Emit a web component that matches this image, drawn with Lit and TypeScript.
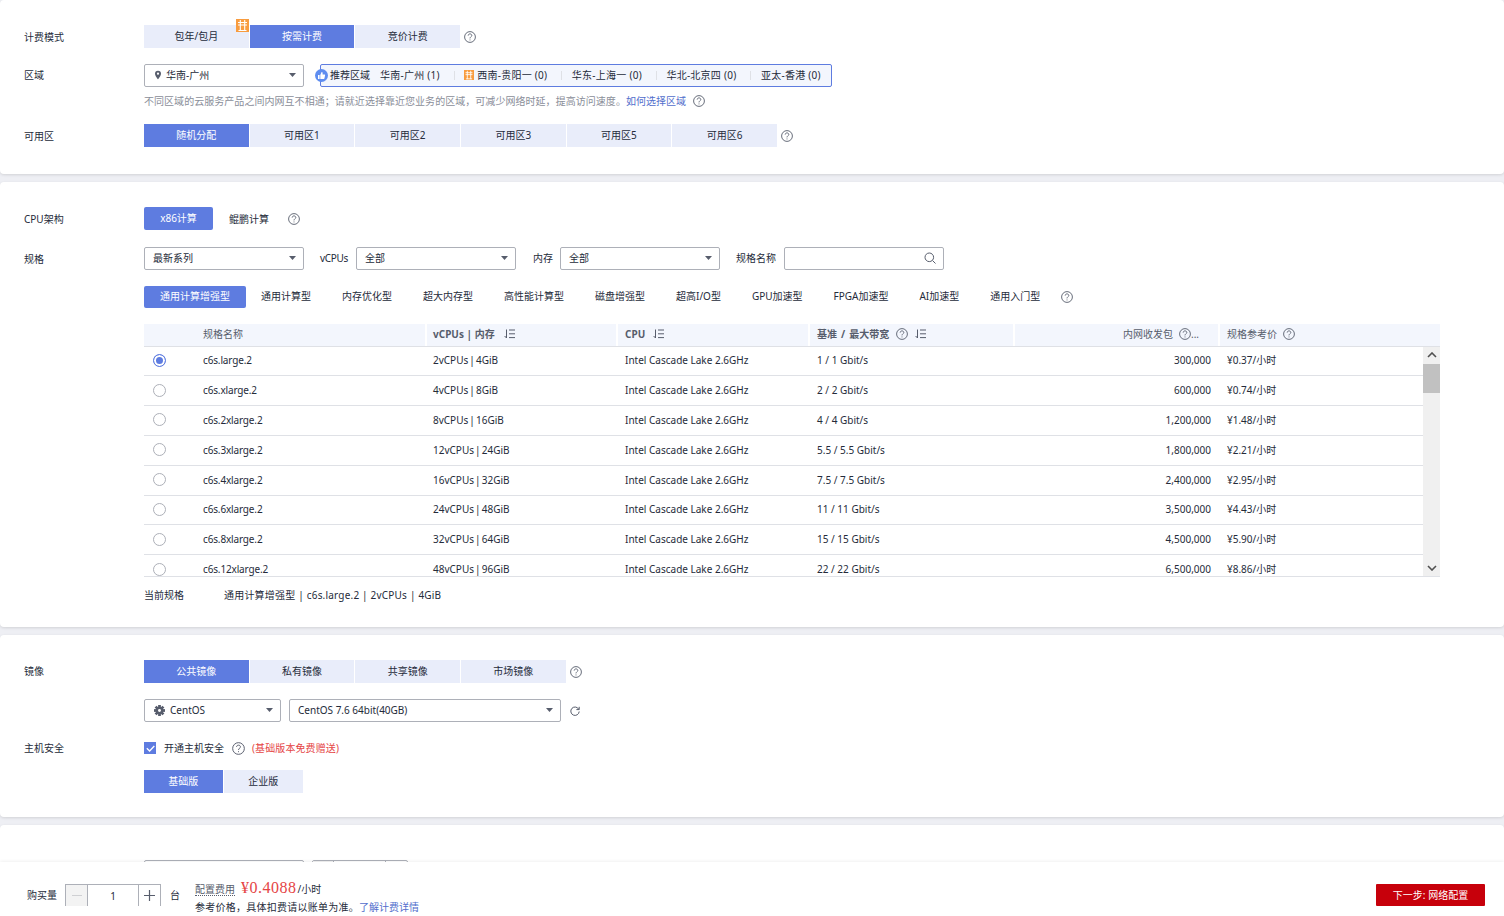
import { LitElement, html, css, svg } from "lit";
import { customElement } from "lit/decorators.js";

const q = (s = 12) => html`<svg class="q" width=${s} height=${s} viewBox="0 0 12 12" fill="none" stroke="#575d6c" stroke-width=".9"><circle cx="6" cy="6" r="5.4"/><path d="M4.2 4.6c0-1 .8-1.7 1.8-1.7s1.8.7 1.8 1.6c0 1.2-1.8 1.4-1.8 2.9"/><path d="M6 8.5v.9"/></svg>`;
const sort = () => html`<svg class="sort" width="11" height="10" viewBox="0 0 11 10" fill="none" stroke="#575d6c" stroke-width="1"><path d="M2.5 0.5v8.5M.6 7l1.9 2M5 1h6M5 4.8h6M5 8.6h6"/></svg>`;
const gift = (s: number) => html`<svg width=${s} height=${s} viewBox="0 0 13 13"><rect width="13" height="13" fill="#f89c3f"/><path d="M2 3.5h9M2 6h9M4.3 1v11M8.7 1v11M2.5 11.5h8" stroke="#fff" stroke-width="1.1" fill="none"/></svg>`;
const arrow = () => html`<svg class="arr" width="7" height="4" viewBox="0 0 7 4"><path d="M0 0h7L3.5 4z" fill="#575d6c"/></svg>`;
const seg = (items: string[], active: number, cls = "") => items.map((t, i) => html`<div class="seg ${cls} ${i === active ? "on" : ""}">${t}</div>`);

const rows = [
  ["c6s.large.2", "2vCPUs | 4GiB", "1 / 1 Gbit/s", "300,000", "¥0.37/小时"],
  ["c6s.xlarge.2", "4vCPUs | 8GiB", "2 / 2 Gbit/s", "600,000", "¥0.74/小时"],
  ["c6s.2xlarge.2", "8vCPUs | 16GiB", "4 / 4 Gbit/s", "1,200,000", "¥1.48/小时"],
  ["c6s.3xlarge.2", "12vCPUs | 24GiB", "5.5 / 5.5 Gbit/s", "1,800,000", "¥2.21/小时"],
  ["c6s.4xlarge.2", "16vCPUs | 32GiB", "7.5 / 7.5 Gbit/s", "2,400,000", "¥2.95/小时"],
  ["c6s.6xlarge.2", "24vCPUs | 48GiB", "11 / 11 Gbit/s", "3,500,000", "¥4.43/小时"],
  ["c6s.8xlarge.2", "32vCPUs | 64GiB", "15 / 15 Gbit/s", "4,500,000", "¥5.90/小时"],
  ["c6s.12xlarge.2", "48vCPUs | 96GiB", "22 / 22 Gbit/s", "6,500,000", "¥8.86/小时"],
];

const regions = ["华南-广州 (1)", "西南-贵阳一 (0)", "华东-上海一 (0)", "华北-北京四 (0)", "亚太-香港 (0)"];
const flavors = ["通用计算增强型", "通用计算型", "内存优化型", "超大内存型", "高性能计算型", "磁盘增强型", "超高I/O型", "GPU加速型", "FPGA加速型", "AI加速型", "通用入门型"];

@customElement("app-root")
export class AppRoot extends LitElement {
  static styles = css`
    :host { display: block; position: relative; height: 916px; overflow: hidden; background: #eeeff4; color: #252b3a;
      font: 10px/14px "Noto Sans", "Noto Sans CJK SC", sans-serif; }
    * { box-sizing: border-box; }
    svg { display: block; flex: none; }
    .card { background: #fff; border-radius: 4px; padding-left: 24px; margin-bottom: 8px; box-shadow: 0 1px 3px rgba(0,0,0,.12); }
    .c1 { padding-top: 25px; padding-bottom: 27px; height: 174px; }
    .c2 { padding-top: 25px; height: 445px; }
    .c3 { padding-top: 25px; height: 182px; }
    .c4 { padding-top: 35px; height: 100px; padding-left: 144px; display: flex; gap: 8px; }
    .row { display: flex; align-items: center; }
    .label { width: 120px; flex: none; padding-top: 1px; }
    .label.lt { padding-top: 0; padding-bottom: 1px; }
    .seg { width: 105.67px; height: 23px; line-height: 23px; text-align: center; background: #e9edfa; border-right: 1px solid #fff; position: relative; flex: none; }
    .seg.on { background: #5e7ce0; color: #fff; }
    .seg.short { width: 79.5px; }
    .seg.short + .seg.short { width: 79.5px; border-right: 0; }
    .seg .badge { position: absolute; right: 0; top: -6px; height: 13px; overflow: hidden; }
    .mt16 { margin-top: 16px; } .mt17 { margin-top: 17px; }
    .q { margin-left: 3.5px; }
    .sel { height: 23px; border: 1px solid #adb0b8; border-radius: 2px; display: flex; align-items: center; padding: 0 8px 1px; position: relative; background: #fff; flex: none; }
    .sel .arr { margin-left: auto; margin-right: -1px; }
    .sel .search { margin-left: auto; margin-right: -1px; }
    .w160 { width: 160px; }
    .pin { margin: 0 5px 0 2px; }
    .strip { width: 512px; height: 23px; margin-left: 16px; border: 1px solid #5e7ce0; border-radius: 2px; background: #f3f6fd; position: relative; display: flex; align-items: center; padding: 0 0 1px 9px; }
    .thumb { position: absolute; left: -6px; top: 4px; }
    .rec { margin-right: 10px; flex: none; white-space: nowrap; }
    .reg { flex: none; display: flex; align-items: center; gap: 3px; padding-right: 15px; margin-right: 9.5px; position: relative; white-space: nowrap; letter-spacing: .25px; }
    .reg::after { content: ""; position: absolute; right: 0; top: 3px; height: 9px; width: 1px; background: #dfe1e6; }
    .reg:last-child { padding-right: 0; margin-right: 0; }
    .reg:last-child::after { display: none; }
    .hint { margin: 6px 0 0 120px; color: #8a8e99; height: 15px; display: flex; align-items: center; white-space: nowrap; letter-spacing: .04px; }
    .hint a, .link { color: #526ecc; }
    .hint .q { margin-left: 7px; }
    .mt-hint { margin-top: 16px; }
    .x86 { width: 69px; height: 23px; line-height: 23px; text-align: center; color: #fff; background: #5e7ce0; border-radius: 2px; }
    .kp { margin: 0 15px 0 16px; }
    .flab { margin: 0 8px 0 16px; padding-bottom: 1px; }
    .flab.vc { letter-spacing: -.3px; }
    .flab.mem { margin: 0 7px 0 17px; }
    .tabs { margin-left: 120px; height: 22px; }
    .tab { padding: 0 15.5px; height: 22px; line-height: 21px; white-space: nowrap; border-radius: 2px; }
    .tab.on { background: #5e7ce0; color: #fff; padding: 0 16px; margin-right: -.5px; }
    .tabs .q { margin-left: 5.5px; }
    .table { margin: 16px 0 0 120px; width: 1296px; }
    .head, .tr { display: grid; grid-template-columns: 59px 222px 191px 192px 205px 205px 1fr; align-items: center; }
    .head { height: 23px; background: #f3f6fd; border-bottom: 1px solid #dfe1e6; color: #575d6c; }
    .head > div { height: 22px; display: flex; align-items: center; padding: 0 0 2px 7px; gap: 8px; border-left: 2px solid #fff; white-space: nowrap; }
    .head > div:first-child, .head > div:nth-child(2) { border-left: 0; padding-left: 0; }
    .head > .c-vc { padding-left: 6px; gap: 9px; }
    .head .b { font-weight: 700; }
    .head .q { margin-left: 0; }
    .head > .wide { word-spacing: 1.5px; gap: 7px; }
    .head > .right { justify-content: flex-end; padding: 0 19px 2px 0; gap: 6px; }
    .head .dots { margin-left: -6px; }
    .head > .price-h { gap: 6px; }
    .bodywrap { display: flex; height: 230px; border-bottom: 1px solid #dfe1e6; }
    .body { width: 1279px; overflow: hidden; }
    .tr { height: 29.85px; padding-bottom: 1.1px; border-bottom: 1px solid #dfe1e6; white-space: nowrap; color: #252b3a; }
    .tr:first-child { height: 29.2px; padding-bottom: 1.5px; }
    .tr > div { padding-left: 9px; }
    .tr > .name { padding-left: 0; letter-spacing: -.15px; }
    .tr > .vc { padding-left: 8px; word-spacing: -1.5px; }
    .tr > .num { text-align: right; padding: 0 7px 0 0; }
    .radio { width: 13px; height: 13px; border-radius: 50%; border: 1px solid #adb0b8; margin-left: 9px; padding: 0 !important; background: #fff; }
    .radio.on { border-color: #5e7ce0; box-shadow: inset 0 0 0 2px #fff; background: #5e7ce0; }
    .track { width: 17px; background: #f0f0f0; position: relative; display: flex; flex-direction: column; align-items: center; }
    .track .up { margin: 5px 0 6px; }
    .bar { width: 17px; height: 29px; background: #c1c1c1; }
    .track .down { margin-top: auto; margin-bottom: 5px; }
    .cur { margin: 10px 0 0 120px; height: 16px; display: flex; align-items: center; letter-spacing: .2px; }
    .cur .k { width: 80px; letter-spacing: 0; }
    .gear { margin-right: 5px; margin-left: 1px; }
    .w137 { width: 137px; } .w272 { width: 272px; margin-left: 8px; }
    .refresh { margin-left: 9px; }
    .mt20 { margin-top: 20px; }
    .h12 { height: 12px; }
    .check { width: 12px; height: 12px; background: #5e7ce0; margin-right: 8px; display: flex; align-items: center; justify-content: center; }
    .red { color: #e54545; margin-left: 7px; letter-spacing: .1px; }
    .sec-q { margin: 0 0 0 4.5px; }
    .sec-q .q { margin-left: 3.5px; }
    .indent { margin-left: 120px; }
    .peek { width: 96px; height: 23px; border: 1px solid #adb0b8; border-radius: 2px; flex: none; display: flex; }
    .peek .pm { width: 21px; background: #f3f3f3; border-right: 1px solid #adb0b8; }
    .peek .pp { width: 22px; margin-left: auto; border-left: 1px solid #adb0b8; }
    .footer { position: absolute; left: 0; right: 0; bottom: 0; height: 54px; background: #fff; box-shadow: 0 -1px 3px rgba(0,0,0,.06); display: flex; padding: 22px 19px 0 27px; }
    .buy { width: 38px; line-height: 22px; }
    .stepper { display: flex; width: 96px; height: 22px; border: 1px solid #adb0b8; border-bottom: 0; flex: none; }
    .stepper > div { display: flex; align-items: center; justify-content: center; }
    .minus { width: 22px; background: #f3f3f3; border-right: 1px solid #adb0b8; }
    .val { flex: 1; }
    .plus { width: 22px; border-left: 1px solid #adb0b8; }
    .tai { margin: 0 15px 0 9px; line-height: 22px; width: 10px; }
    .fee { margin-top: -5px; }
    .l1 { display: flex; align-items: baseline; height: 18px; }
    .dot { border-bottom: 1px dotted #575d6c; color: #575d6c; line-height: 12px; }
    .price { color: #e54545; font: 16px/18px "Liberation Serif", serif; letter-spacing: .5px; margin: 0 1px 0 6px; }
    .l2 { margin-top: 3px; white-space: nowrap; }
    .l2 .tx { letter-spacing: .25px; }
    .next { margin-left: auto; width: 109px; height: 22px; line-height: 22px; text-align: center; background: #c7000b; color: #fff; border-radius: 1px; }
  `;

  render() {
    return html`
      <div class="card c1">
        <div class="row">
          <div class="label">计费模式</div>
          <div class="seg">包年/包月<span class="badge">${gift(13)}</span></div>
          ${seg(["按需计费", "竞价计费"], 0)}
          ${q()}
        </div>
        <div class="row mt16">
          <div class="label lt">区域</div>
          <div class="sel w160">
            <svg class="pin" width="6" height="10" viewBox="0 0 7 10"><path fill-rule="evenodd" d="M3.5 0A3.5 3.5 0 0 1 7 3.5C7 6 3.5 10 3.5 10S0 6 0 3.5A3.5 3.5 0 0 1 3.5 0zm0 2.2a1.3 1.3 0 1 0 0 2.6 1.3 1.3 0 0 0 0-2.6z" fill="#575d6c"/></svg>
            华南-广州${arrow()}
          </div>
          <div class="strip">
            <svg class="thumb" width="13" height="13" viewBox="0 0 13 13"><circle cx="6.5" cy="6.5" r="6.5" fill="#5e8df0"/><path d="M3 6h1.6v4H3zM5.3 6l1.3-3c.7 0 1 .5 1 1.1V5.500h2c.4 0 .6.300.5.700l-.7 3.300c0 .3-.3.500-.6.500H5.300z" fill="#fff"/></svg>
            <span class="rec">推荐区域</span>
            ${regions.map((r, i) => html`<div class="reg">${i === 1 ? gift(10) : ""}${r}</div>`)}
          </div>
        </div>
        <div class="hint">不同区域的云服务产品之间内网互不相通；请就近选择靠近您业务的区域，可减少网络时延，提高访问速度。<a>如何选择区域</a>${q()}</div>
        <div class="row mt-hint">
          <div class="label">可用区</div>
          ${seg(["随机分配", "可用区1", "可用区2", "可用区3", "可用区5", "可用区6"], 0)}
          ${q()}
        </div>
      </div>

      <div class="card c2">
        <div class="row">
          <div class="label">CPU架构</div>
          <div class="x86">x86计算</div>
          <div class="kp">鲲鹏计算</div>
          ${q()}
        </div>
        <div class="row mt17">
          <div class="label">规格</div>
          <div class="sel w160">最新系列${arrow()}</div>
          <span class="flab vc">vCPUs</span>
          <div class="sel w160">全部${arrow()}</div>
          <span class="flab mem">内存</span>
          <div class="sel w160">全部${arrow()}</div>
          <span class="flab">规格名称</span>
          <div class="sel w160"><svg class="search" width="12" height="12" viewBox="0 0 12 12" fill="none" stroke="#575d6c" stroke-width="1"><circle cx="5.300" cy="5.300" r="4.300"/><path d="M8.500 8.500l3 3"/></svg></div>
        </div>
        <div class="row tabs mt16">
          ${flavors.map((f, i) => html`<div class="tab ${i === 0 ? "on" : ""}">${f}</div>`)}
          ${q()}
        </div>
        <div class="table">
          <div class="head">
            <div></div>
            <div>规格名称</div>
            <div class="b c-vc">vCPUs | 内存 ${sort()}</div>
            <div class="b">CPU ${sort()}</div>
            <div class="b wide">基准 / 最大带宽 ${q()} ${sort()}</div>
            <div class="right">内网收发包 ${q()}<span class="dots">...</span></div>
            <div class="price-h">规格参考价 ${q()}</div>
          </div>
          <div class="bodywrap">
            <div class="body">
              ${rows.map((r, i) => html`<div class="tr">
                <div class="radio ${i === 0 ? "on" : ""}"></div>
                <div class="name">${r[0]}</div>
                <div class="vc">${r[1]}</div>
                <div>Intel Cascade Lake 2.6GHz</div>
                <div>${r[2]}</div>
                <div class="num">${r[3]}</div>
                <div>${r[4]}</div>
              </div>`)}
            </div>
            <div class="track">
              <svg class="up" width="10" height="6" viewBox="0 0 10 6" fill="none" stroke="#505050" stroke-width="1.600"><path d="M1 5l4-4 4 4"/></svg>
              <div class="bar"></div>
              <svg class="down" width="10" height="6" viewBox="0 0 10 6" fill="none" stroke="#505050" stroke-width="1.600"><path d="M1 1l4 4 4-4"/></svg>
            </div>
          </div>
        </div>
        <div class="cur"><span class="k">当前规格</span><span>通用计算增强型 | c6s.large.2 | 2vCPUs | 4GiB</span></div>
      </div>

      <div class="card c3">
        <div class="row">
          <div class="label lt">镜像</div>
          ${seg(["公共镜像", "私有镜像", "共享镜像", "市场镜像"], 0)}
          ${q()}
        </div>
        <div class="row mt16 indent">
          <div class="sel w137">
            <svg class="gear" width="11" height="11" viewBox="0 0 12 12"><g fill="#575d6c">${[0, 45, 90, 135].map((a) => svg`<rect x="4.500" y="0" width="3" height="12" transform="rotate(${a} 6 6)"/>`)}<circle cx="6" cy="6" r="4.200"/></g><circle cx="6" cy="6" r="1.600" fill="#fff"/></svg>
            CentOS${arrow()}
          </div>
          <div class="sel w272">CentOS 7.6 64bit(40GB)${arrow()}</div>
          <svg class="refresh" width="10" height="10" viewBox="0 0 10 10" fill="none" stroke="#575d6c" stroke-width="1"><path d="M8.800 3.400A4.200 4.200 0 1 0 9.200 5.500"/><path d="M9.200 .8v2.800H6.400" /></svg>
        </div>
        <div class="row mt20 h12">
          <div class="label lt">主机安全</div>
          <div class="check"><svg width="9" height="7" viewBox="0 0 9 7" fill="none" stroke="#fff" stroke-width="1.300"><path d="M.8 3.300l2.800 2.700L8.300 1"/></svg></div>
          开通主机安全
          <span class="sec-q">${q(13)}</span>
          <span class="red">(基础版本免费赠送)</span>
        </div>
        <div class="row mt16 indent">
          ${seg(["基础版", "企业版"], 0, "short")}
        </div>
      </div>

      <div class="card c4">
        <div class="sel w160"></div>
        <div class="peek"><div class="pm"></div><div class="pp"></div></div>
      </div>

      <div class="footer">
        <div class="buy">购买量</div>
        <div class="stepper">
          <div class="minus"><svg width="10" height="1" viewBox="0 0 10 1"><path d="M0 .5h10" stroke="#cfd0d3"/></svg></div>
          <div class="val">1</div>
          <div class="plus"><svg width="11" height="11" viewBox="0 0 11 11"><path d="M0 5.500h11M5.500 0v11" stroke="#575d6c" stroke-width="1.200"/></svg></div>
        </div>
        <div class="tai">台</div>
        <div class="fee">
          <div class="l1"><span class="dot">配置费用</span><span class="price">¥0.4088</span><span>/小时</span></div>
          <div class="l2"><span class="tx">参考价格，具体扣费请以账单为准。</span><span class="link">了解计费详情</span></div>
        </div>
        <div class="next">下一步: 网络配置</div>
      </div>
    `;
  }
}
